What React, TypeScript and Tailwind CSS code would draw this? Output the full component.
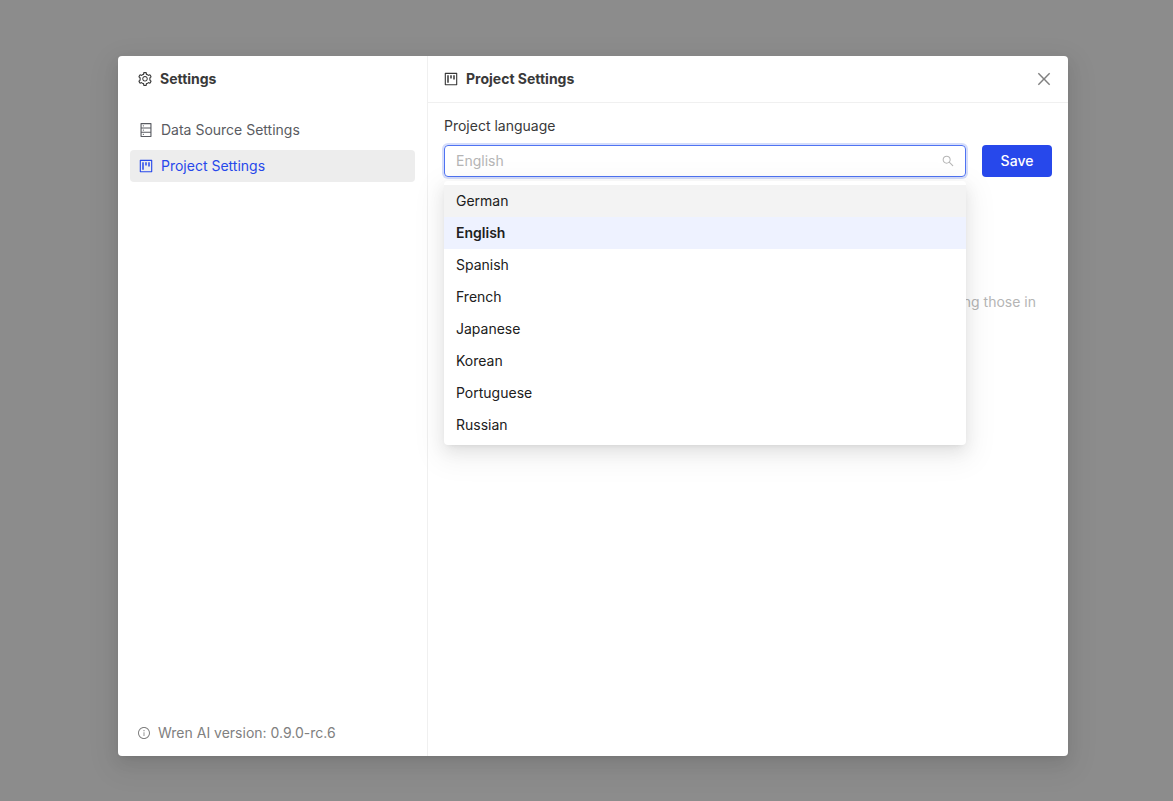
import React, { useState } from 'react';
import {
  AiOutlineClose,
  AiOutlineDatabase,
  AiOutlineInfoCircle,
  AiOutlineProject,
  AiOutlineSearch,
  AiOutlineSetting,
} from 'react-icons/ai';

// Trims the empty margin that the icon set leaves round its glyphs
const iconBox = '64 64 896 896';

const languages = [
  'German',
  'English',
  'Spanish',
  'French',
  'Japanese',
  'Korean',
  'Portuguese',
  'Russian',
];

const menu = [
  { label: 'Data Source Settings', icon: AiOutlineDatabase },
  { label: 'Project Settings', icon: AiOutlineProject },
];

function Sidebar() {
  const [current, setCurrent] = useState('Project Settings');

  return (
    <aside className="flex w-[310px] shrink-0 flex-col border-r border-[#f0f0f0]">
      <h1 className="flex items-center gap-2 px-5 py-3 font-bold text-[#393939]">
        <AiOutlineSetting size={14} viewBox={iconBox} />
        Settings
      </h1>
      <nav className="flex flex-1 flex-col gap-1 p-3">
        {menu.map(({ label, icon: Icon }) => (
          <button
            key={label}
            type="button"
            onClick={() => setCurrent(label)}
            className={
              current === label
                ? 'flex h-8 items-center gap-2 rounded bg-[#ededed] px-[9px] text-[#2748eb]'
                : 'flex h-8 items-center gap-2 rounded px-[9px] text-[#595b61]'
            }
          >
            <Icon size={14} viewBox={iconBox} />
            {label}
          </button>
        ))}
      </nav>
      <div className="flex items-center gap-2 px-5 py-3 text-[#808080]">
        <AiOutlineInfoCircle size={12} viewBox={iconBox} />
        Wren AI version: 0.9.0-rc.6
      </div>
    </aside>
  );
}

function LanguageSelect() {
  const [selected, setSelected] = useState('English');
  const [active, setActive] = useState('German');

  return (
    <div className="relative min-w-0 flex-1">
      <div className="flex h-8 items-center rounded border border-[#4f73f2] px-[11px] shadow-[0_0_0_2px_rgba(47,84,235,0.2)]">
        <input
          id="language"
          role="combobox"
          aria-expanded="true"
          aria-controls="language-list"
          placeholder={selected}
          className="min-w-0 flex-1 bg-transparent outline-none placeholder:text-[#b5b5b5]"
        />
        <AiOutlineSearch size={12} viewBox={iconBox} className="text-[#b5b5b5]" />
      </div>
      {/* Dropdown floats over the rest of the form */}
      <ul
        id="language-list"
        role="listbox"
        aria-label="Project language"
        className="absolute inset-x-0 top-full z-10 mt-1 rounded bg-white py-1 shadow-[0_3px_6px_-4px_rgba(0,0,0,0.12),0_6px_16px_0_rgba(0,0,0,0.08),0_9px_28px_8px_rgba(0,0,0,0.05)]"
      >
        {languages.map((name) => (
          <li
            key={name}
            role="option"
            aria-selected={name === selected}
            onMouseEnter={() => setActive(name)}
            onClick={() => setSelected(name)}
            className={
              name === selected
                ? 'bg-[#eef2ff] px-3 py-[5px] font-semibold text-[#202020]'
                : name === active
                  ? 'bg-[#f3f3f3] px-3 py-[5px] text-[#202020]'
                  : 'px-3 py-[5px] text-[#202020]'
            }
          >
            {name}
          </li>
        ))}
      </ul>
    </div>
  );
}

function ProjectSettings() {
  return (
    <section className="min-w-0 flex-1">
      <header className="flex items-center gap-2 border-b border-[#f0f0f0] px-4 py-3 text-[#393939]">
        <AiOutlineProject size={14} viewBox={iconBox} />
        <h2 className="flex-1 font-bold">Project Settings</h2>
        <button type="button" aria-label="Close" className="text-[#808080]">
          <AiOutlineClose size={16} viewBox={iconBox} />
        </button>
      </header>
      <form className="px-4 py-3" onSubmit={(e) => e.preventDefault()}>
        <label htmlFor="language" className="mb-2 block text-[#393939]">
          Project language
        </label>
        <div className="flex gap-4">
          <LanguageSelect />
          <button type="submit" className="h-8 w-[70px] rounded bg-[#2748eb] font-medium text-white">
            Save
          </button>
        </div>
        <p className="mt-[114px] pr-4 text-right text-[#b5b5b5]">including those in</p>
      </form>
    </section>
  );
}

export default function App() {
  return (
    <div className="min-h-screen bg-[#8c8c8c] pt-14 pr-4 pb-11 pl-[29px] font-['Inter',sans-serif] text-sm leading-[22px]">
      <main className="mx-auto flex min-h-[700px] max-w-[950px] rounded bg-white shadow-[0_3px_6px_-4px_rgba(0,0,0,0.12),0_6px_16px_0_rgba(0,0,0,0.08),0_9px_28px_8px_rgba(0,0,0,0.05)]">
        <Sidebar />
        <ProjectSettings />
      </main>
    </div>
  );
}
